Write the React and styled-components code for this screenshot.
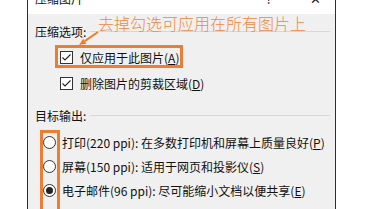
import React from "react";
import styled, { createGlobalStyle } from "styled-components";

const Global = createGlobalStyle`
  html, body { margin: 0; padding: 0; background: #ffffff; }
  body { font-family: "Noto Sans CJK SC", "Noto Sans", sans-serif; color: #111; }
`;

const Dialog = styled.div`
  position: relative;
  margin-left: 27px;
  width: 309px;
  height: 209px;
  box-sizing: border-box;
  border-left: 1px solid #2e2e2e;
  border-right: 1px solid #2e2e2e;
  background: #f0f0f0;
  overflow: hidden;
`;

const TitleBar = styled.div`
  height: 14px;
  background: #ffffff;
  display: flex;
  align-items: flex-end;
  padding: 0 14px 0 7px;
  overflow: hidden;
`;

const TitleText = styled.span`
  font-size: 12px;
  line-height: 14px;
  margin-bottom: 8px;
  flex: 1;
`;

const TitleButton = styled.span`
  font-size: 13px;
  line-height: 14px;
  margin-bottom: 8px;
  margin-left: ${(p) => p.$gap}px;
  color: #222;
`;

const Body = styled.div`
  padding: 7px 5px 0 7px;
`;

const GroupHeader = styled.div`
  display: flex;
  align-items: center;
  height: 20px;
  font-size: 12px;
  margin-top: ${(p) => p.$top || 0}px;
  &::after {
    content: "";
    flex: 1;
    height: 1px;
    background: #d7d7d7;
    margin-left: 4px;
  }
`;

const OptionList = styled.div`
  display: flex;
  flex-direction: column;
  padding-left: ${(p) => p.$indent}px;
  margin-top: ${(p) => p.$top}px;
`;

const OptionRow = styled.div`
  display: flex;
  align-items: center;
  height: ${(p) => p.$h}px;
  font-size: 12px;
  white-space: nowrap;
`;

const Box = styled.span`
  width: 13px;
  height: 13px;
  box-sizing: border-box;
  border: 1px solid #333;
  background: #fff;
  display: inline-flex;
  align-items: center;
  justify-content: center;
  margin-right: 7px;
  flex-shrink: 0;
`;

const Radio = styled.span`
  width: 13px;
  height: 13px;
  box-sizing: border-box;
  border: 1px solid #333;
  border-radius: 50%;
  background: #fff;
  display: inline-flex;
  align-items: center;
  justify-content: center;
  margin-right: 6px;
  flex-shrink: 0;
  &::after {
    content: "";
    width: 7px;
    height: 7px;
    border-radius: 50%;
    background: ${(p) => (p.$on ? "#222" : "transparent")};
  }
`;

const Highlight = styled.div`
  position: absolute;
  left: ${(p) => p.$x}px;
  top: ${(p) => p.$y}px;
  width: ${(p) => p.$w}px;
  height: ${(p) => p.$h}px;
  border: 3px solid #ed7d31;
  box-sizing: border-box;
  pointer-events: none;
`;

const Note = styled.div`
  position: absolute;
  left: 70px;
  top: 14px;
  font-size: 16px;
  line-height: 18px;
  font-weight: 300;
  color: #ef8a3e;
  white-space: nowrap;
  letter-spacing: 0px;
`;

const Arrow = styled.svg`
  position: absolute;
  left: 48px;
  top: 28px;
`;

const Check = () => (
  <svg width="11" height="11" viewBox="0 0 11 11">
    <polyline points="1.5,5.5 4,8 9.5,2.5" fill="none" stroke="#222" strokeWidth="1.1" />
  </svg>
);

const Key = ({ children }) => (
  <>
    (<u>{children}</u>)
  </>
);

export default function App() {
  return (
    <>
      <Global />
      <Dialog>
        <TitleBar>
          <TitleText>压缩图片</TitleText>
          <TitleButton $gap={0}>?</TitleButton>
          <TitleButton $gap={38}>✕</TitleButton>
        </TitleBar>
        <Body>
          <GroupHeader>压缩选项:</GroupHeader>
          <OptionList $indent={25} $top={3}>
            <OptionRow $h={26}>
              <Box><Check /></Box>
              仅应用于此图片<Key>A</Key>
            </OptionRow>
            <OptionRow $h={26}>
              <Box><Check /></Box>
              删除图片的剪裁区域<Key>D</Key>
            </OptionRow>
          </OptionList>
          <GroupHeader $top={9}>目标输出:</GroupHeader>
          <OptionList $indent={8} $top={5}>
            <OptionRow $h={24}>
              <Radio />
              打印(220 ppi): 在多数打印机和屏幕上质量良好<Key>P</Key>
            </OptionRow>
            <OptionRow $h={24}>
              <Radio />
              屏幕(150 ppi): 适用于网页和投影仪<Key>S</Key>
            </OptionRow>
            <OptionRow $h={24}>
              <Radio $on />
              电子邮件(96 ppi): 尽可能缩小文档以便共享<Key>E</Key>
            </OptionRow>
          </OptionList>
        </Body>
        <Highlight $x={27} $y={45} $w={128} $h={23} />
        <Highlight $x={12} $y={130} $w={20} $h={100} />
        <Note>去掉勾选可应用在所有图片上</Note>
        <Arrow width="30" height="20" viewBox="0 0 30 20">
          <line x1="22" y1="4" x2="8.8" y2="13.15" stroke="#ed7d31" strokeWidth="2" />
          <polygon points="3,17 10.45,15.65 7.15,10.65" fill="#ed7d31" />
        </Arrow>
      </Dialog>
    </>
  );
}
